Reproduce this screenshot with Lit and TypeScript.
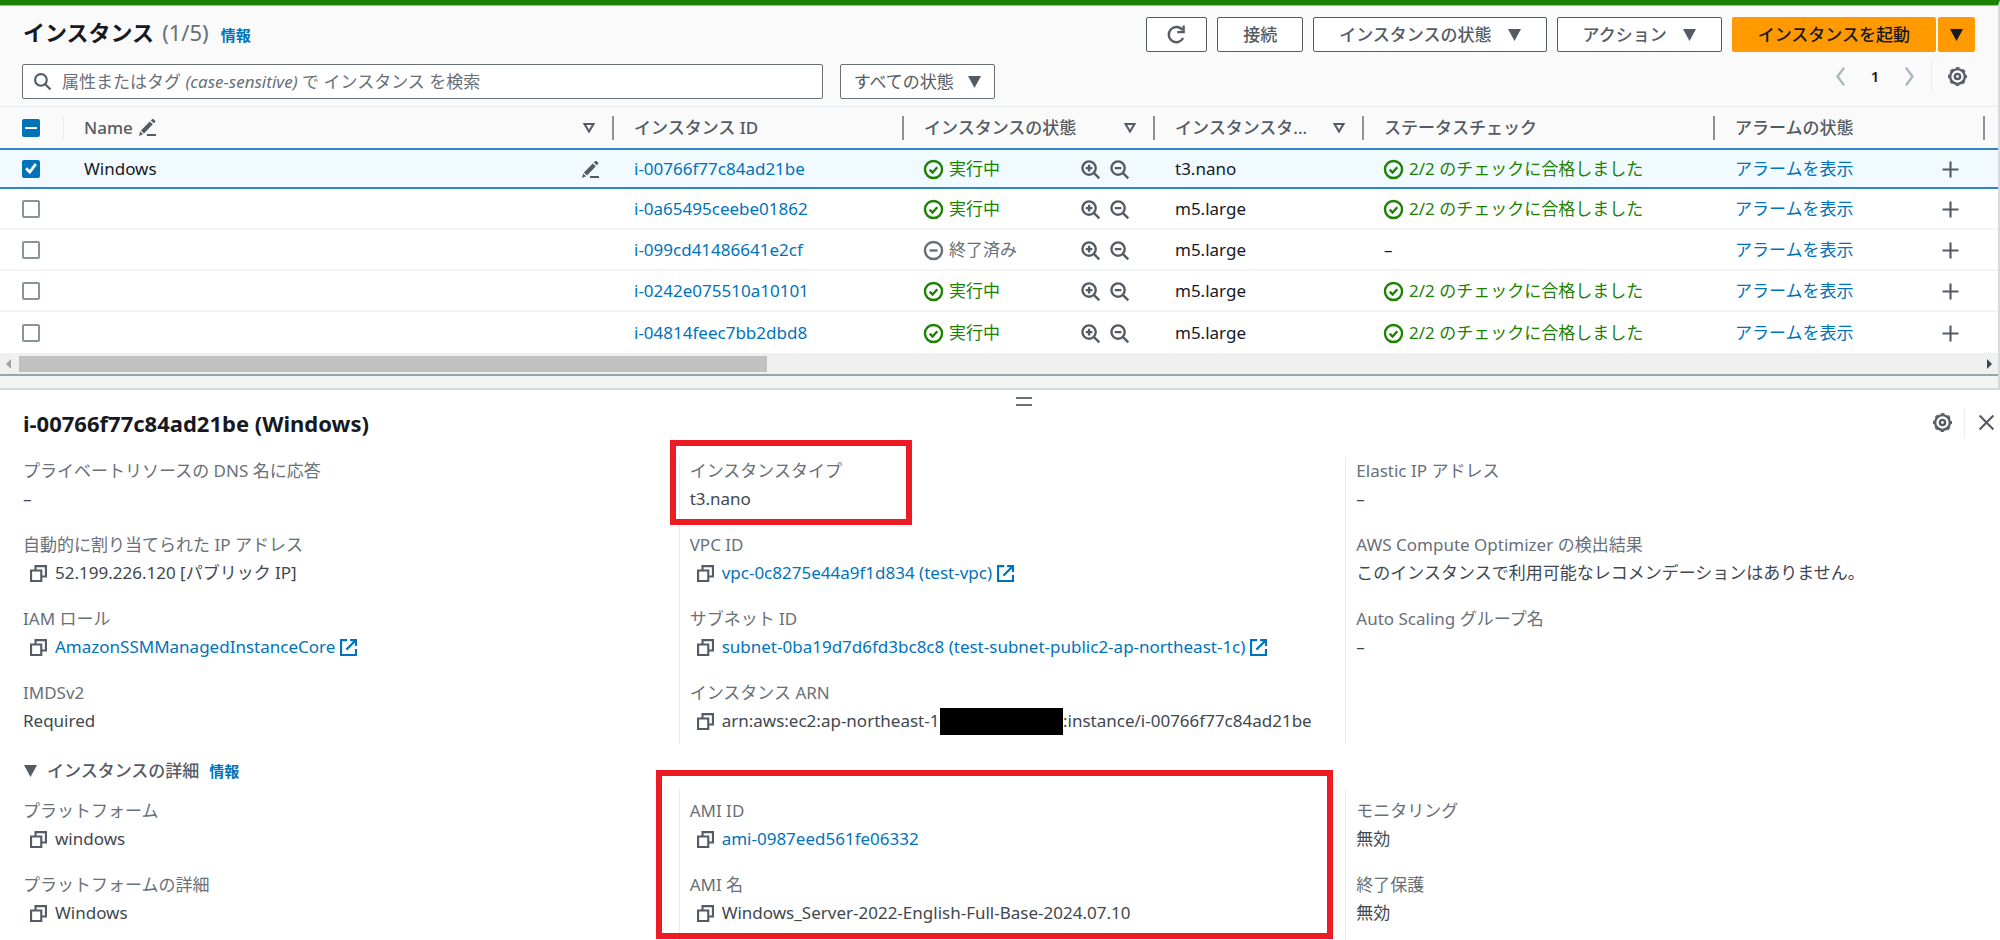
import { LitElement, html, css, svg, nothing, TemplateResult } from "lit";
import { customElement, state } from "lit/decorators.js";
import { classMap } from "lit/directives/class-map.js";

interface Instance {
  name: string;
  id: string;
  running: boolean;
  type: string;
}

interface Field {
  label: string;
  value: TemplateResult | string;
  kind?: "copy" | "link" | "external";
  marked?: boolean;
}

const INSTANCES: Instance[] = [
  { name: "Windows", id: "i-00766f77c84ad21be", running: true, type: "t3.nano" },
  { name: "", id: "i-0a65495ceebe01862", running: true, type: "m5.large" },
  { name: "", id: "i-099cd41486641e2cf", running: false, type: "m5.large" },
  { name: "", id: "i-0242e075510a10101", running: true, type: "m5.large" },
  { name: "", id: "i-04814feec7bb2dbd8", running: true, type: "m5.large" },
];

const SUMMARY: Field[][] = [
  [
    { label: "プライベートリソースの DNS 名に応答", value: "–" },
    { label: "自動的に割り当てられた IP アドレス", value: "52.199.226.120 [パブリック IP]", kind: "copy" },
    { label: "IAM ロール", value: "AmazonSSMManagedInstanceCore", kind: "external" },
    { label: "IMDSv2", value: "Required" },
  ],
  [
    { label: "インスタンスタイプ", value: "t3.nano", marked: true },
    { label: "VPC ID", value: "vpc-0c8275e44a9f1d834 (test-vpc)", kind: "external" },
    { label: "サブネット ID", value: "subnet-0ba19d7d6fd3bc8c8 (test-subnet-public2-ap-northeast-1c)", kind: "external" },
    {
      label: "インスタンス ARN",
      value: html`arn:aws:ec2:ap-northeast-1:<span class="redacted"></span>:instance/i-00766f77c84ad21be`,
      kind: "copy",
    },
  ],
  [
    { label: "Elastic IP アドレス", value: "–" },
    { label: "AWS Compute Optimizer の検出結果", value: "このインスタンスで利用可能なレコメンデーションはありません。" },
    { label: "Auto Scaling グループ名", value: "–" },
  ],
];

const DETAILS: Field[][] = [
  [
    { label: "プラットフォーム", value: "windows", kind: "copy" },
    { label: "プラットフォームの詳細", value: "Windows", kind: "copy" },
  ],
  [
    { label: "AMI ID", value: "ami-0987eed561fe06332", kind: "link" },
    { label: "AMI 名", value: "Windows_Server-2022-English-Full-Base-2024.07.10", kind: "copy" },
  ],
  [
    { label: "モニタリング", value: "無効" },
    { label: "終了保護", value: "無効" },
  ],
];

const SHAPES = {
  refresh: svg`<path d="M13.6 11A6.400 6.400 0 1 1 13 4.200"/><path d="M14 .5v5.500H8.600"/>`,
  search: svg`<circle cx="6.5" cy="6.5" r="5.500"/><path d="M10.400 10.400 15.500 15.500"/>`,
  zoomIn: svg`<circle cx="6.8" cy="6.8" r="5.6"/><path d="M11 11l4.400 4.400M6.8 4v5.600M4 6.8h5.600"/>`,
  zoomOut: svg`<circle cx="6.8" cy="6.8" r="5.6"/><path d="M11 11l4.400 4.400M4 6.8h5.600"/>`,
  check: svg`<circle cx="8" cy="8" r="7.200"/><path d="M4.8 8.100l2.400 2.400 4-4.400"/>`,
  stopped: svg`<circle cx="8" cy="8" r="7.200"/><path d="M4.600 8h6.800"/>`,
  copy: svg`<path d="M1 5.200h9.600V15H1z"/><path d="M5.200 5V1H15v9.800h-4.200"/>`,
  external: svg`<path d="M6.800 1H1v14h14V9.500"/><path d="M9.500 1H15v5.500M14.600 1.400 6 10"/>`,
  left: svg`<path d="M11 .5 5.500 8l5.500 7.500"/>`,
  right: svg`<path d="M5 .5 10.500 8 5 15.500"/>`,
  plus: svg`<path d="M8 .5v15M.5 8h15"/>`,
  close: svg`<path d="M1.500 1.500l13 13M14.500 1.500l-13 13"/>`,
  gear: svg`<circle cx="8" cy="8" r="6.200"/><circle class="teeth" cx="8" cy="8" r="7.500"/><circle cx="8" cy="8" r="2.200"/>`,
};

const icon = (name: keyof typeof SHAPES, cls = "") =>
  html`<svg class="icon ${cls}" viewBox="0 0 16 16" aria-hidden="true">${SHAPES[name]}</svg>`;

const pencil = () => html`<svg class="icon solid" viewBox="0 0 16 16" aria-hidden="true">
  <path d="M0 16l1.100-4.200 2.700 2.500zM1.800 10.800l8.300-8.500 2.900 2.700-8.300 8.700zM11.100 1.300 12.500 0h1l1.800 1.700v.8l-1.400 1.500zM7.500 14h8.500v2h-8.500z"/>
</svg>`;

const caret = () => html`<svg class="caret" viewBox="0 0 12 11" aria-hidden="true"><path d="M0 0h12L6 11z"/></svg>`;

const filterMark = () => html`<button class="bare sort" aria-label="並べ替え">
  <svg class="sort-mark" viewBox="0 0 12 11" aria-hidden="true"><path d="M1.500 1.500h9L6 9z"/></svg>
</button>`;

@customElement("app-root")
export class AppRoot extends LitElement {
  @state() private selected = new Set<string>([INSTANCES[0].id]);

  static styles = css`
    :host {
      display: flex;
      flex-direction: column;
      min-height: 100vh;
      background: #fff;
      color: #16191f;
      font: 17px/28px "Noto Sans", "Noto Sans CJK JP", sans-serif;
      overflow: hidden;
    }
    * { box-sizing: border-box; }
    button, input, select { font: inherit; color: inherit; margin: 0; }
    h1, h2, h3, dl, dd { margin: 0; }
    a { color: #0073bb; text-decoration: none; }

    .icon {
      width: 17px;
      height: 17px;
      flex: none;
      fill: none;
      stroke: #545b64;
      stroke-width: 2;
      overflow: visible;
    }
    .icon.solid { fill: #545b64; stroke: none; }
    .icon.large { width: 19px; height: 19px; }
    .icon.pale { stroke: #aab7b8; }
    .icon.green { stroke: #1d8102; }
    .icon.gray { stroke: #687078; }
    .icon.blue { stroke: #0073bb; }
    .teeth { stroke-width: 1; stroke-dasharray: 3 2.890; stroke-dashoffset: 1.500; }
    .caret { width: 13px; height: 12px; fill: #545b64; flex: none; }
    .sort-mark { width: 12px; height: 12px; fill: none; stroke: #545b64; stroke-width: 2; }
    .bare { display: flex; align-items: center; padding: 0; border: 0; background: none; }

    .list {
      border-top: 5px solid #1d8102;
      border-right: 2px solid #d5dbdb;
      background: #fafafa;
    }
    .top {
      display: flex;
      align-items: flex-start;
      justify-content: space-between;
      padding: 11px 23px 0 23px;
      border-top: 1px solid #aab7b8;
      height: 59px;
    }
    .title { display: flex; align-items: baseline; gap: 8px; font-size: 22px; line-height: 30px; font-weight: 700; }
    .count { font-weight: 400; color: #687078; }
    .info { font-size: 15px; font-weight: 700; margin-left: 4px; }
    .actions { display: flex; gap: 10px; }
    .btn {
      display: flex;
      align-items: center;
      justify-content: center;
      gap: 16px;
      height: 35px;
      padding: 0 25px;
      border: 1px solid #545b64;
      border-radius: 2px;
      background: #fff;
      color: #545b64;
      font-weight: 500;
      white-space: nowrap;
    }
    .btn.square { padding: 0 20px; }
    .split { display: flex; gap: 2px; }
    .btn.primary { border-color: #f90; background: #f90; color: #16191f; }
    .btn.drop { padding: 0 11px; }
    .primary .caret { fill: #16191f; }

    .filters { display: flex; align-items: flex-start; gap: 17px; padding: 0 23px 0 22px; height: 42px; }
    .search {
      display: grid;
      align-items: center;
      width: 41%;
      height: 35px;
      border: 1px solid #687078;
      border-radius: 2px;
      background: #fff;
      color: #687078;
    }
    .search > * { grid-area: 1 / 1; }
    .search .icon { margin-left: 11px; }
    .query { width: 100%; height: 100%; padding: 0 12px 0 39px; border: 0; background: none; outline: 0; }
    .hint { padding-left: 39px; pointer-events: none; white-space: nowrap; overflow: hidden; }
    .query:not(:placeholder-shown) + .hint { visibility: hidden; }
    .picker { display: grid; align-items: center; width: 155px; height: 35px; }
    .picker > * { grid-area: 1 / 1; }
    .picker .caret { justify-self: end; margin-right: 14px; pointer-events: none; }
    .state {
      appearance: none;
      width: 100%;
      height: 100%;
      padding: 0 32px 0 13px;
      border: 1px solid #687078;
      border-radius: 2px;
      background: #fff;
      color: #545b64;
    }
    .pager { display: flex; align-items: center; margin-left: auto; padding-right: 8px; height: 24px; }
    .page { width: 50px; text-align: center; font-weight: 600; font-size: 15px; }
    .prefs { margin-left: 12px; padding-left: 16px; height: 34px; border-left: 1px solid #eaeded; }

    .grid { width: 100%; table-layout: fixed; border-collapse: separate; border-spacing: 0; border-top: 1px solid #eaeded; }
    .c-check { width: 64px; }
    .c-id { width: 290px; }
    .c-state { width: 251px; }
    .c-type { width: 209px; }
    .c-status { width: 351px; }
    .c-alarm { width: 270px; }
    .c-end { width: 13px; }
    th { height: 41px; padding: 0; text-align: left; font-weight: 500; color: #545b64; }
    .th {
      display: flex;
      align-items: center;
      gap: 6px;
      height: 24px;
      line-height: 24px;
      padding: 0 17px 0 20px;
      border-right: 2px solid #879596;
      white-space: nowrap;
    }
    .th.faint { padding-left: 22px; border-right: 1px solid #eaeded; }
    .th .sort { margin-left: auto; }
    td {
      height: 41px;
      padding: 1px 20px 0;
      background: #fff;
      border-bottom: 2px solid #f2f3f3;
      white-space: nowrap;
    }
    td.pick { padding-left: 22px; }
    td.title-cell { padding-right: 15px; }
    .on td { background: #f1faff; border-top: 2px solid #2d87c6; border-bottom-color: #2d87c6; }
    .last td { border-bottom: 0; }
    .cell { display: flex; align-items: center; gap: 6px; }
    .cell .end { margin-left: auto; }
    .ok { color: #1d8102; }
    .off { color: #687078; }
    .lens { display: flex; gap: 10px; margin-left: auto; margin-right: 6px; }
    .add { margin-left: auto; margin-right: 6px; }

    .box {
      appearance: none;
      display: grid;
      place-items: center;
      width: 18px;
      height: 18px;
      border: 2px solid #879596;
      border-radius: 2px;
      background: #fff;
    }
    .box:checked, .box:indeterminate { border-color: #0073bb; background: #0073bb; }
    .box:indeterminate::before { content: ""; width: 12px; height: 2px; background: #fff; }
    .box:checked:not(:indeterminate)::before {
      content: "";
      width: 14px;
      height: 14px;
      background: #fff;
      clip-path: polygon(8% 52%, 22% 38%, 40% 58%, 76% 8%, 92% 22%, 42% 88%);
    }

    .scroll { display: flex; align-items: center; gap: 8px; height: 21px; padding: 0 6px; background: #f0f0f0; }
    .thumb { width: calc(38% - 7px); height: 16px; background: #c1c1c1; }
    .arrow { width: 5px; height: 10px; fill: #a3a3a3; }
    .arrow.next { margin-left: auto; fill: #414750; }

    .gap { height: 16px; border-top: 2px solid #99a3a8; border-bottom: 2px solid #d5dbdb; background: #f2f3f3; }

    .panel { display: flex; flex-direction: column; flex: 1; }
    .grip { display: flex; justify-content: center; padding: 7px 0 0 48px; }
    .bars { width: 16px; height: 9px; border: solid #687078; border-width: 2px 0; }
    .head { display: flex; align-items: center; height: 51px; padding: 0 5px 18px 23px; }
    .name { font-size: 22px; line-height: 28px; font-weight: 700; }
    .tools { display: flex; align-items: center; margin-left: auto; }
    .shut { height: 30px; margin-left: 12px; padding-left: 13px; border-left: 1px solid #eaeded; }

    .columns {
      display: grid;
      grid-template-columns: calc(100% / 3 + 12px) calc(100% / 3) 1fr;
    }
    .columns.rest { flex: 1; }
    .column {
      position: relative;
      display: flex;
      flex-direction: column;
      gap: 18px;
      padding: 0 10px 9px;
      border-left: 1px solid #eaeded;
    }
    .rest .column { padding: 9px 10px; }
    .columns .column:first-child { padding-left: 23px; border-left: 0; }
    .field { position: relative; white-space: nowrap; }
    .label { color: #687078; }
    .value { display: flex; align-items: center; color: #414750; }
    .value .icon { margin: 0 8px 0 7px; }
    .value .icon.blue { margin: 0 0 0 5px; }
    .redacted { width: 123px; height: 27px; margin-left: -4px; background: #000; }
    .text { display: flex; align-items: center; }
    .mark-small, .mark-large { position: absolute; border: 6px solid #ed1c24; pointer-events: none; }
    .mark-small { left: -20px; top: -17px; width: 242px; height: 85px; }
    .mark-large { left: -24px; right: 12px; top: -18px; height: 169px; }

    .section { display: flex; align-items: center; gap: 10px; height: 44px; padding: 10px 23px 0 24px; color: #545b64; }
    .section .bare { gap: 10px; color: #545b64; }
    .section-name { font-size: 17px; font-weight: 500; }
    .section .info { margin-left: 0; }
  `;

  private toggle(id: string) {
    const next = new Set(this.selected);
    next.has(id) ? next.delete(id) : next.add(id);
    this.selected = next;
  }

  private toggleAll() {
    this.selected = new Set(this.selected.size ? [] : INSTANCES.map((i) => i.id));
  }

  private row(item: Instance, index: number) {
    const on = this.selected.has(item.id);
    return html`<tr class=${classMap({ on, last: index === INSTANCES.length - 1 })}>
      <td class="pick">
        <input class="box" type="checkbox" aria-label=${item.id} .checked=${on} @change=${() => this.toggle(item.id)} />
      </td>
      <td class="title-cell">
        <div class="cell">${item.name}${item.name
          ? html`<button class="bare end" aria-label="Name を編集">${pencil()}</button>`
          : nothing}</div>
      </td>
      <td><a href="#${item.id}">${item.id}</a></td>
      <td>
        <div class="cell ${item.running ? "ok" : "off"}">
          ${item.running ? icon("check", "large green") : icon("stopped", "large gray")}${item.running ? "実行中" : "終了済み"}
          <span class="lens">
            <button class="bare" aria-label="フィルターに追加">${icon("zoomIn", "large")}</button>
            <button class="bare" aria-label="フィルターから除外">${icon("zoomOut", "large")}</button>
          </span>
        </div>
      </td>
      <td>${item.type}</td>
      <td>
        ${item.running
          ? html`<div class="cell ok">${icon("check", "large green")}2/2 のチェックに合格しました</div>`
          : "–"}
      </td>
      <td>
        <div class="cell">
          <a href="#alarms">アラームを表示</a>
          <button class="bare add" aria-label="アラームを作成">${icon("plus")}</button>
        </div>
      </td>
      <td></td>
    </tr>`;
  }

  private field(f: Field) {
    const linked = f.kind === "link" || f.kind === "external";
    return html`<div class="field">
      <dt class="label">${f.label}</dt>
      <dd class="value">
        ${f.kind ? html`<button class="bare" aria-label="コピー">${icon("copy")}</button>` : nothing}
        ${linked
          ? html`<a class="text" href="#detail">${f.value}${f.kind === "external" ? icon("external", "blue") : nothing}</a>`
          : html`<span class="text">${f.value}</span>`}
      </dd>
      ${f.marked ? html`<span class="mark-small"></span>` : nothing}
    </div>`;
  }

  render() {
    const count = this.selected.size;
    return html`
      <section class="list">
        <header class="top">
          <h1 class="title">インスタンス <span class="count">(${count}/${INSTANCES.length})</span><a class="info" href="#info">情報</a></h1>
          <div class="actions">
            <button class="btn square" aria-label="更新">${icon("refresh", "large")}</button>
            <button class="btn">接続</button>
            <button class="btn">インスタンスの状態${caret()}</button>
            <button class="btn">アクション${caret()}</button>
            <div class="split">
              <button class="btn primary">インスタンスを起動</button>
              <button class="btn primary drop" aria-label="その他の起動オプション">${caret()}</button>
            </div>
          </div>
        </header>
        <div class="filters">
          <div class="search">
            ${icon("search")}
            <input class="query" id="query" type="text" placeholder=" " />
            <label class="hint" for="query">属性またはタグ <em>(case-sensitive)</em> で インスタンス を検索</label>
          </div>
          <div class="picker">
            <select class="state" aria-label="インスタンスの状態">
              <option>すべての状態</option>
            </select>
            ${caret()}
          </div>
          <nav class="pager" aria-label="ページ">
            <button class="bare" aria-label="前のページ">${icon("left", "large pale")}</button>
            <span class="page">1</span>
            <button class="bare" aria-label="次のページ">${icon("right", "large pale")}</button>
            <button class="bare prefs" aria-label="設定">${icon("gear", "large")}</button>
          </nav>
        </div>
        <table class="grid">
          <colgroup>
            <col class="c-check" /><col /><col class="c-id" /><col class="c-state" /><col class="c-type" />
            <col class="c-status" /><col class="c-alarm" /><col class="c-end" />
          </colgroup>
          <thead>
            <tr>
              <th>
                <div class="th faint">
                  <input class="box" type="checkbox" aria-label="すべて選択"
                    .checked=${count === INSTANCES.length}
                    .indeterminate=${count > 0 && count < INSTANCES.length}
                    @change=${this.toggleAll} />
                </div>
              </th>
              <th><div class="th">Name ${pencil()}${filterMark()}</div></th>
              <th><div class="th">インスタンス ID</div></th>
              <th><div class="th">インスタンスの状態${filterMark()}</div></th>
              <th><div class="th">インスタンスタ...${filterMark()}</div></th>
              <th><div class="th">ステータスチェック</div></th>
              <th><div class="th">アラームの状態</div></th>
              <th></th>
            </tr>
          </thead>
          <tbody>${INSTANCES.map((item, i) => this.row(item, i))}</tbody>
        </table>
        <div class="scroll">
          <svg class="arrow" viewBox="0 0 5 10" aria-hidden="true"><path d="M5 0v10L0 5z"/></svg>
          <div class="thumb"></div>
          <svg class="arrow next" viewBox="0 0 5 10" aria-hidden="true"><path d="M0 0v10l5-5z"/></svg>
        </div>
        <div class="gap"></div>
      </section>
      <section class="panel">
        <div class="grip"><div class="bars"></div></div>
        <header class="head">
          <h2 class="name">i-00766f77c84ad21be (Windows)</h2>
          <div class="tools">
            <button class="bare" aria-label="設定">${icon("gear", "large")}</button>
            <button class="bare shut" aria-label="閉じる">${icon("close")}</button>
          </div>
        </header>
        <div class="columns">
          ${SUMMARY.map((col) => html`<dl class="column">${col.map((f) => this.field(f))}</dl>`)}
        </div>
        <div class="section">
          <button class="bare" aria-expanded="true">${caret()}<span class="section-name">インスタンスの詳細</span></button>
          <a class="info" href="#info">情報</a>
        </div>
        <div class="columns rest">
          ${DETAILS.map(
            (col, i) => html`<dl class="column">${col.map((f) => this.field(f))}${i === 1
              ? html`<span class="mark-large"></span>`
              : nothing}</dl>`
          )}
        </div>
      </section>
    `;
  }
}
